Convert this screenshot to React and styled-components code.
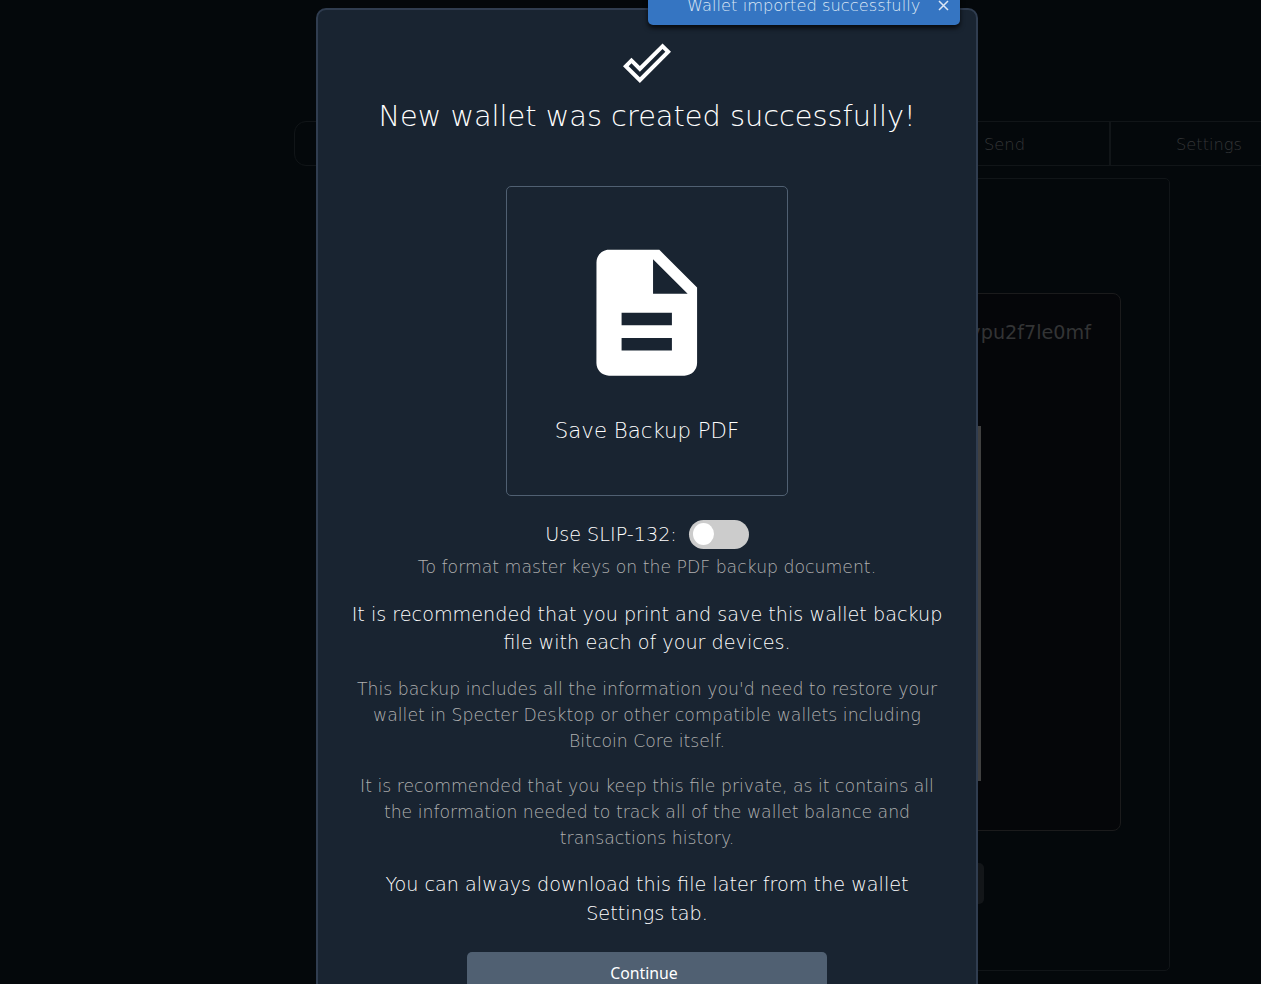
import React from "react";
import styled, { createGlobalStyle } from "styled-components";

const GlobalStyle = createGlobalStyle`
  * { box-sizing: border-box; }
  html, body { margin: 0; height: 100%; overflow: hidden; background: #04080b; }
  body { font-family: "DejaVu Sans", sans-serif; font-weight: 200; color: #fff; }
  p, h1 { margin: 0; font-weight: 200; }
`;

const Page = styled.main`
  height: 984px;
  overflow: hidden;
  position: relative;
`;

const WalletView = styled.section`
  width: 1014px;
  margin-left: 294px;
  padding-top: 121px;
  display: flex;
  flex-direction: column;
`;

const Tabs = styled.nav`
  display: flex;
  height: 45px;
  border: 1px solid #111518;
  border-radius: 12px;
`;

const Tab = styled.div`
  flex: ${(p) => (p.$width ? `0 0 ${p.$width}px` : "1")};
  display: flex;
  align-items: center;
  justify-content: center;
  padding-top: 1px;
  font-size: 16.3px;
  color: #343638;
  border-right: ${(p) => (p.$last ? "0" : "2px solid #111518")};
`;

const ReceiveCard = styled.div`
  width: 740px;
  height: 793px;
  margin: 12px 0 0 136px;
  border: 1px solid #111518;
  border-radius: 5px;
  padding-top: 114px;
  display: flex;
  flex-direction: column;
  align-items: center;
`;

const AddressBox = styled.div`
  width: 642px;
  height: 538px;
  border: 1px solid #1b1b1c;
  border-radius: 8px;
  background: #050609;
  padding: 25px 29px 0;
  display: flex;
  flex-direction: column;
`;

const Address = styled.div`
  align-self: flex-end;
  font-size: 19.2px;
  font-weight: 400;
  line-height: 28px;
  color: #333435;
`;

const QrFrame = styled.div`
  width: 362px;
  height: 355px;
  margin: 79px auto 0;
  background: #404040;
`;

const NewAddressButton = styled.div`
  width: 368px;
  height: 41px;
  margin-top: 32px;
  border-radius: 5px;
  background: #131619;
`;

const Modal = styled.section`
  position: absolute;
  top: 8px;
  left: 316px;
  width: 662px;
  height: 1040px;
  padding: 29px 28px 0;
  border: 2px solid #303d50;
  border-radius: 10px;
  background: #192431;
  display: flex;
  flex-direction: column;
  align-items: center;
  text-align: center;
`;

const CheckIcon = styled.svg`
  width: 48px;
  height: 48px;
  fill: #fff;
`;

const Title = styled.h1`
  margin-top: 10px;
  font-size: 28.8px;
  line-height: 38px;
  white-space: nowrap;
`;

const BackupCard = styled.div`
  width: 282px;
  height: 310px;
  margin-top: 51px;
  padding-top: 50px;
  border: 1px solid #506072;
  border-radius: 5px;
  display: flex;
  flex-direction: column;
  align-items: center;
`;

const FileIcon = styled.svg`
  width: 152px;
  height: 152px;
  fill: #fff;
`;

const BackupLabel = styled.div`
  margin-top: 27px;
  font-size: 21.28px;
  line-height: 30px;
`;

const ToggleRow = styled.div`
  display: flex;
  align-items: center;
  gap: 12px;
  height: 29px;
  margin-top: 24px;
  font-size: 19.2px;
  line-height: 27px;
`;

const ToggleLabel = styled.span`
  padding-bottom: 1px;
`;

const Switch = styled.span`
  width: 60px;
  height: 29px;
  padding: 3px 4px;
  border-radius: 15px;
  background: #ccc;
`;

const Knob = styled.span`
  display: block;
  width: 21px;
  height: 22px;
  border-radius: 50%;
  background: #fff;
`;

const Text = styled.p`
  margin-top: ${(p) => p.$gap}px;
  font-size: ${(p) => (p.$note ? 17.28 : 19.2)}px;
  line-height: ${(p) => (p.$note ? 25.92 : 28.8)}px;
  color: ${(p) => (p.$note ? "#b0b0b0" : "#fff")};
  white-space: nowrap;
`;

const ContinueButton = styled.button`
  width: 360px;
  height: 42px;
  margin-top: 23.3px;
  padding: 0 6px 0 0;
  flex-shrink: 0;
  border: 0;
  border-radius: 5px;
  background: #506072;
  color: #fff;
  font: 400 15.8px "Noto Sans", sans-serif;
`;

const Toast = styled.div`
  position: absolute;
  top: -15px;
  left: 648px;
  width: 312px;
  height: 40px;
  padding: 0 11px 0 39px;
  display: flex;
  align-items: center;
  justify-content: space-between;
  border-radius: 5px;
  background: #3575c2;
  box-shadow: 0 3px 5px rgba(0, 0, 0, 0.75);
  color: #dce7f5;
  font-size: 16.3px;
  white-space: nowrap;
`;

const CloseIcon = styled.svg`
  width: 11px;
  height: 11px;
  stroke: #dce7f5;
  stroke-width: 1.5;
`;

export default function App() {
  return (
    <Page>
      <GlobalStyle />
      <WalletView>
        <Tabs>
          <Tab />
          <Tab $width={211}>Send</Tab>
          <Tab $width={196} $last>Settings</Tab>
        </Tabs>
        <ReceiveCard>
          <AddressBox>
            <Address>ypu2f7le0mf</Address>
            <QrFrame />
          </AddressBox>
          <NewAddressButton />
        </ReceiveCard>
      </WalletView>

      <Modal>
        <CheckIcon viewBox="0 0 24 24">
          <path d="M19.77 5.03l1.4 1.4L8.43 19.17l-5.6-5.6 1.4-1.4 4.2 4.2L19.77 5.03m0-2.83L8.43 13.54l-4.2-4.2L0 13.57 8.43 22 24 6.43 19.77 2.2z" />
        </CheckIcon>
        <Title>New wallet was created successfully!</Title>
        <BackupCard>
          <FileIcon viewBox="-0.04 -0.04 24.16 24.16">
            <path d="M14 2H6c-1.1 0-1.99.9-1.99 2L4 20c0 1.1.89 2 1.99 2H18c1.1 0 2-.9 2-2V8l-6-6zm2 16H8v-2h8v2zm0-4H8v-2h8v2zm-3-5V3.5L18.5 9H13z" />
          </FileIcon>
          <BackupLabel>Save Backup PDF</BackupLabel>
        </BackupCard>
        <ToggleRow>
          <ToggleLabel>Use SLIP-132:</ToggleLabel>
          <Switch><Knob /></Switch>
        </ToggleRow>
        <Text $note $gap={6}>To format master keys on the PDF backup document.</Text>
        <Text $gap={19.6}>
          It is recommended that you print and save this wallet backup<br />
          file with each of your devices.
        </Text>
        <Text $note $gap={19}>
          This backup includes all the information you'd need to restore your<br />
          wallet in Specter Desktop or other compatible wallets including<br />
          Bitcoin Core itself.
        </Text>
        <Text $note $gap={19.2}>
          It is recommended that you keep this file private, as it contains all<br />
          the information needed to track all of the wallet balance and<br />
          transactions history.
        </Text>
        <Text $gap={19.2}>
          You can always download this file later from the wallet<br />
          Settings tab.
        </Text>
        <ContinueButton>Continue</ContinueButton>
      </Modal>

      <Toast>
        Wallet imported successfully
        <CloseIcon viewBox="0 0 11 11">
          <path d="M1 1L10 10M10 1L1 10" />
        </CloseIcon>
      </Toast>
    </Page>
  );
}
